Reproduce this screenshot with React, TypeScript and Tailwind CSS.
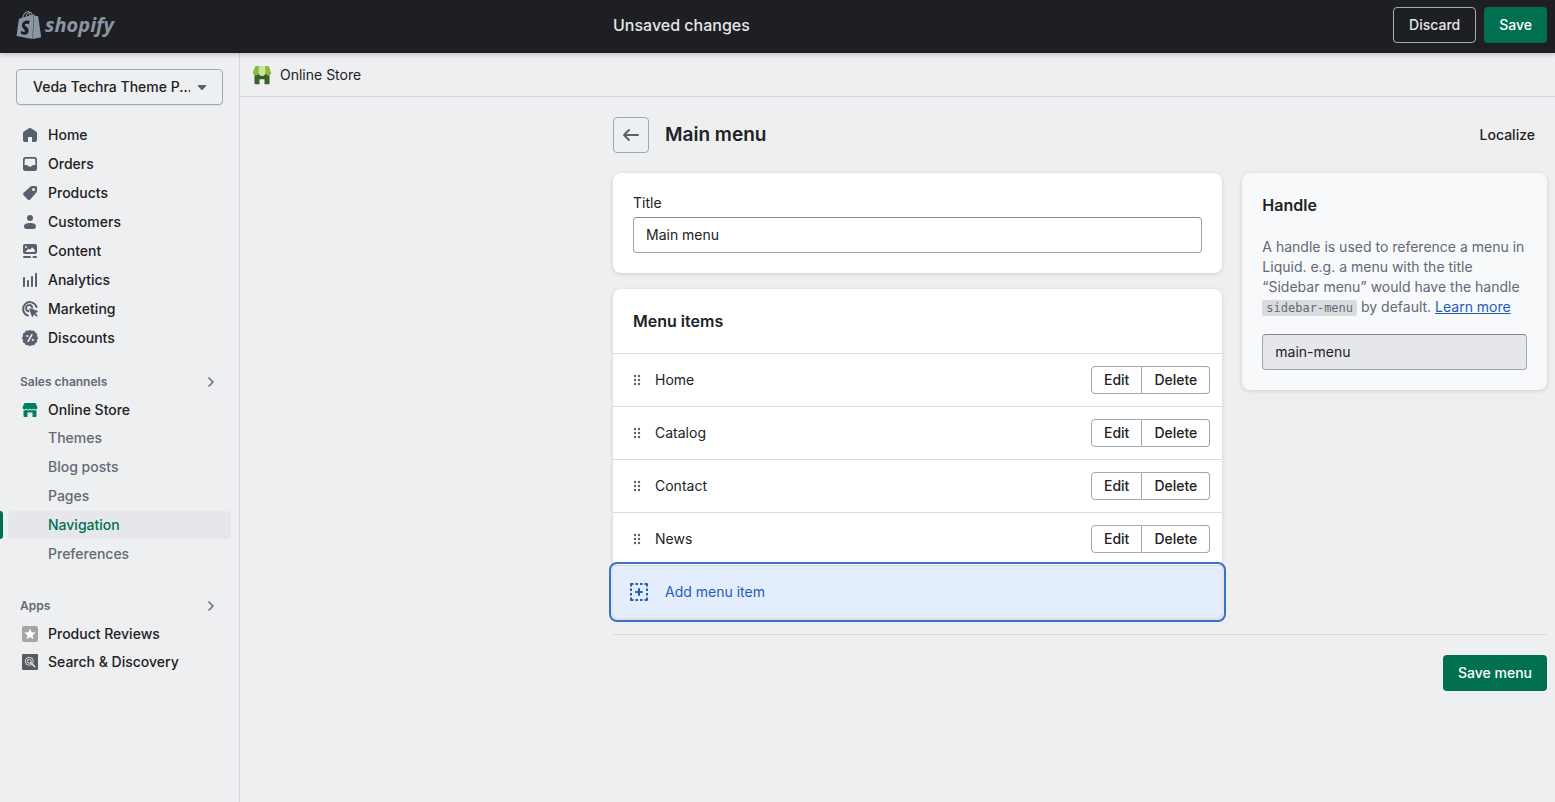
import type { ReactNode } from 'react';
import { SiShopify } from 'react-icons/si';

type NavEntry = { label: string; icon: ReactNode };

function Glyph({ children, className = '' }: { children: ReactNode; className?: string }) {
  return (
    <svg viewBox="0 0 20 20" aria-hidden="true" className={`h-5 w-5 shrink-0 ${className}`} fill="currentColor">
      {children}
    </svg>
  );
}

const mainNav: NavEntry[] = [
  {
    label: 'Home',
    icon: (
      <Glyph>
        <path d="M3 8.2c0-.7.3-1.3.9-1.7l5.2-3.3a1.7 1.7 0 0 1 1.8 0l5.2 3.3c.6.4.9 1 .9 1.7v6.9c0 1-.9 1.9-1.9 1.9h-2.6a.5.5 0 0 1-.5-.5v-4a.5.5 0 0 0-.5-.5h-3a.5.5 0 0 0-.5.5v4a.5.5 0 0 1-.5.5H4.9c-1 0-1.9-.9-1.9-1.9z" />
      </Glyph>
    ),
  },
  {
    label: 'Orders',
    icon: (
      <Glyph>
        <path
          fillRule="evenodd"
          d="M5.5 3A2.5 2.5 0 0 0 3 5.5v9A2.5 2.5 0 0 0 5.5 17h9a2.5 2.5 0 0 0 2.5-2.500v-9A2.5 2.5 0 0 0 14.500 3zM5.700 4.700a.9.900 0 0 0-.9.9L4.500 11h2.300c.4 0 .7.200.9.600.3.700.9 1.200 2.300 1.200s2-.5 2.300-1.200c.2-.4.500-.6.900-.6h2.300l-.3-5.400a.9.900 0 0 0-.9-.9z"
        />
      </Glyph>
    ),
  },
  {
    label: 'Products',
    icon: (
      <Glyph>
        <path
          fillRule="evenodd"
          d="M10.600 3.500A2 2 0 0 1 12 3h3.500A1.500 1.500 0 0 1 17 4.500V8c0 .6-.2 1.100-.6 1.500l-6.200 6.900a1.700 1.700 0 0 1-2.400 0l-4.200-4.200a1.700 1.700 0 0 1 0-2.400zM13.500 8a1.500 1.500 0 1 0 0-3 1.500 1.500 0 0 0 0 3z"
        />
      </Glyph>
    ),
  },
  {
    label: 'Customers',
    icon: (
      <Glyph>
        <circle cx="10" cy="6" r="3" />
        <path d="M4 14.200C4 12.200 6.500 11 10 11s6 1.200 6 3.200c0 1.700-1 2.800-2.500 2.800h-7C5 17 4 15.900 4 14.200z" />
      </Glyph>
    ),
  },
  {
    label: 'Content',
    icon: (
      <Glyph>
        <path
          fillRule="evenodd"
          d="M5 3a2 2 0 0 0-2 2v6a2 2 0 0 0 2 2h10a2 2 0 0 0 2-2V5a2 2 0 0 0-2-2zM6 7a1 1 0 1 0 0-2 1 1 0 0 0 0 2zM5.200 11h9.600V9.100a.5.500 0 0 0-.2-.4l-2-2a.6.600 0 0 0-.8 0L10 8.800l-1.100-.9a.6.600 0 0 0-.8 0z"
        />
        <rect x="3" y="15" width="8" height="2" rx="1" />
        <rect x="12.500" y="15" width="4.500" height="2" rx="1" />
      </Glyph>
    ),
  },
  {
    label: 'Analytics',
    icon: (
      <Glyph>
        <rect x="3" y="7" width="2" height="10" rx=".8" />
        <rect x="7" y="10" width="2" height="7" rx=".8" />
        <rect x="11" y="6" width="2" height="11" rx=".8" />
        <rect x="15" y="3" width="2" height="14" rx=".8" />
      </Glyph>
    ),
  },
  {
    label: 'Marketing',
    icon: (
      <Glyph>
        <g fill="none" stroke="currentColor" strokeWidth="1.900" strokeLinecap="round">
          <path d="M16.600 8A6.900 6.900 0 1 0 8 16.600" />
          <path d="M12.200 8.500A3.100 3.100 0 1 0 8.500 12.200" />
        </g>
        <path d="M9.300 10.200c-.2-.6.400-1.200 1-1l7 2.600c.7.300.7 1.200 0 1.500l-2 .8 2 2a.8.800 0 0 1-1.200 1.200l-2-2-.9 1.900c-.3.700-1.300.7-1.500 0z" />
      </Glyph>
    ),
  },
  {
    label: 'Discounts',
    icon: (
      <Glyph>
        <path d="M10 2l1.900 1 2.100-.2 1.100 1.900L17 5.800l-.2 2.200L18 10l-1.200 1.900.2 2.200-1.900 1.100-1.100 1.900-2.100-.2L10 18l-1.900-1.100-2.100.2-1.100-1.900L3 14.100l.2-2.200L2 10l1.200-2L3 5.800l1.900-1.100L6 2.800l2.100.2z" stroke="currentColor" strokeWidth=".4" strokeLinejoin="round" />
        <path d="M11.900 6.700l-3.800 6.600" stroke="#eeeff1" strokeWidth="1.600" strokeLinecap="round" />
        <circle cx="7.200" cy="8" r="1.100" fill="#eeeff1" />
        <circle cx="12.800" cy="12" r="1.100" fill="#eeeff1" />
      </Glyph>
    ),
  },
];

const storeNav = ['Themes', 'Blog posts', 'Pages', 'Navigation', 'Preferences'];
const menuItems = ['Home', 'Catalog', 'Contact', 'News'];

const appNav: NavEntry[] = [
  {
    label: 'Product Reviews',
    icon: (
      <Glyph>
        <rect x="2" y="2" width="16" height="16" rx="2.500" fill="#a5a5a5" />
        <path d="M10 4.500l1.600 3.700 4 .3-3 2.700.9 4-3.500-2.100-3.500 2.100.9-4-3-2.700 4-.3z" fill="#fff" />
      </Glyph>
    ),
  },
  {
    label: 'Search & Discovery',
    icon: (
      <Glyph>
        <rect x="2" y="2" width="16" height="16" rx="1" fill="#595c5e" />
        <g fill="none" stroke="#d9dbdd" strokeWidth="1">
          <circle cx="9.300" cy="9.300" r="4" />
          <circle cx="9.300" cy="9.300" r="2" />
          <path d="M10.500 10.500l4.300 4.300" strokeWidth="1.600" strokeLinecap="round" />
        </g>
      </Glyph>
    ),
  },
];

function SectionHeading({ children }: { children: string }) {
  return (
    <button type="button" className="flex h-7 w-full items-center justify-between pr-[18px] pl-5 text-xs font-semibold text-[#616a75]">
      {children}
      <Glyph className="text-[#6d7580]">
        <path d="M8 6l4 4-4 4" fill="none" stroke="currentColor" strokeWidth="1.700" strokeLinecap="round" strokeLinejoin="round" />
      </Glyph>
    </button>
  );
}

function NavLink({ entry, iconColor = 'text-[#57606e]' }: { entry: NavEntry; iconColor?: string }) {
  return (
    <a href="#" className="flex h-7 items-center gap-2 pl-5 font-medium">
      <span className={iconColor}>{entry.icon}</span>
      {entry.label}
    </a>
  );
}

function Sidebar() {
  return (
    <nav aria-label="Main" className="w-60 shrink-0 border-r border-[#d2d5d9] pt-4">
      <div className="mx-4 grid items-center">
        <select
          aria-label="Store"
          className="col-start-1 row-start-1 h-9 w-full appearance-none rounded border border-[#a0a8b4] bg-transparent pr-8 pl-4 font-medium shadow-[0_1px_0_rgba(0,0,0,0.05)]"
        >
          <option>Veda Techra Theme P...</option>
        </select>
        <Glyph className="pointer-events-none col-start-1 row-start-1 mr-[11px] justify-self-end text-[#57606e]">
          <path d="M6.300 8h7.400c.5 0 .7.500.4.900l-3.500 3.800a.8.800 0 0 1-1.200 0L5.900 8.900c-.3-.4-.1-.9.400-.9z" />
        </Glyph>
      </div>

      <ul className="mt-4 flex flex-col gap-px">
        {mainNav.map((entry) => (
          <li key={entry.label}>
            <NavLink entry={entry} />
          </li>
        ))}
      </ul>

      <div className="mt-4">
        <SectionHeading>Sales channels</SectionHeading>
        <NavLink
          iconColor="text-[#008060]"
          entry={{
            label: 'Online Store',
            icon: (
              <Glyph>
                <path d="M4.200 3.600A1 1 0 0 1 5.100 3h9.800a1 1 0 0 1 .9.600L17.400 7.300c.2 1.200-.6 2.200-1.700 2.200-.9 0-1.500-.5-1.900-1.100-.4.600-1 1.100-1.900 1.100S10.400 9 10 8.400c-.4.600-1 1.100-1.900 1.100S6.600 9 6.200 8.400c-.4.600-1 1.100-1.900 1.100-1.100 0-1.900-1-1.700-2.200z" />
                <path d="M3.500 10.400c1 .2 2-.1 2.700-.6 1.100.8 2.700.8 3.800 0 1.100.8 2.700.8 3.800 0 .7.500 1.700.8 2.700.6V16a1 1 0 0 1-1 1H13a.5.500 0 0 1-.5-.5V13a.5.500 0 0 0-.5-.5H8a.5.500 0 0 0-.5.500v3.500a.5.500 0 0 1-.5.500H4.500a1 1 0 0 1-1-1z" />
              </Glyph>
            ),
          }}
        />
        <ul className="flex flex-col gap-px">
          {storeNav.map((label) =>
            label === 'Navigation' ? (
              <li key={label} className="flex gap-[5px] pr-2">
                <span className="h-7 w-[3px] rounded-r bg-[#007050]" />
                <a href="#" aria-current="page" className="flex h-7 flex-1 items-center rounded bg-[#e6e7ea] pl-10 font-medium text-[#007050]">
                  {label}
                </a>
              </li>
            ) : (
              <li key={label}>
                <a href="#" className="flex h-7 items-center pl-12 font-medium text-[#616a75]">
                  {label}
                </a>
              </li>
            ),
          )}
        </ul>
      </div>

      <div className="mt-6">
        <SectionHeading>Apps</SectionHeading>
        {appNav.map((entry) => (
          <NavLink key={entry.label} entry={entry} />
        ))}
      </div>
    </nav>
  );
}

function TopBar() {
  return (
    <header className="z-10 flex h-[53px] items-start bg-[#1e1f23] text-white shadow-[0_2px_4px_rgba(0,0,0,0.18)]">
      <a href="#" aria-label="Shopify home" className="flex h-[50px] w-60 shrink-0 items-center gap-0.5 pl-[15px] text-[#8a96a3]">
        <SiShopify className="h-7 w-7" />
        <span className="font-['Open_Sans',sans-serif] text-xl leading-6 font-bold italic">shopify</span>
      </a>
      <div className="flex min-w-0 flex-1 justify-end pt-[7px] pr-2">
        <div className="flex w-full max-w-[934px] items-center gap-2">
          <h2 className="mr-auto text-base font-medium text-[#e4e6e9]">Unsaved changes</h2>
          <button type="button" className="h-9 rounded border border-[#a6acb5] px-[15px] font-medium text-[#e4e6e9]">
            Discard
          </button>
          <button type="button" className="h-9 rounded bg-[#007050] px-[15px] font-medium">
            Save
          </button>
        </div>
      </div>
    </header>
  );
}

function StoreIcon() {
  return (
    <svg viewBox="0 0 20 20" aria-hidden="true" className="h-5 w-5">
      <path d="M2.500 8h15v10.200a1 1 0 0 1-1 1H12.500v-5h-5v5h-4a1 1 0 0 1-1-1z" fill="#36622b" />
      <path d="M3.300 1h4.100L6.800 7.800a2.900 2.900 0 0 1-5.800-.6z" fill="#8dbb3c" />
      <path d="M16.700 1h-4.100l.6 6.800a2.900 2.900 0 0 0 5.800-.6z" fill="#8dbb3c" />
      <path d="M7 1h6l.4 6.500a3.400 3.400 0 0 1-6.800 0z" fill="#cbe59a" />
    </svg>
  );
}

function MenuRow({ label }: { label: string }) {
  return (
    <li className="flex h-[53px] items-center border-t border-[#d8dade] pr-3 pl-[14px]">
      <Glyph className="mr-2 text-[#57606e]">
        {[6, 10, 14].map((y) => (
          <g key={y}>
            <circle cx="8" cy={y} r="1.200" />
            <circle cx="12" cy={y} r="1.200" />
          </g>
        ))}
      </Glyph>
      <span className="mr-auto">{label}</span>
      <button type="button" aria-label={`Edit ${label}`} className="h-7 rounded-l border border-[#a0a8b4] px-3 font-medium">
        Edit
      </button>
      <button type="button" aria-label={`Delete ${label}`} className="h-7 rounded-r border border-l-0 border-[#a0a8b4] px-3 font-medium">
        Delete
      </button>
    </li>
  );
}

const card = 'rounded-lg shadow-[0_1px_4px_rgba(0,0,0,0.14)]';
const field = 'block h-9 w-full rounded border border-[#a0a4b0] border-t-[#84878d] px-3 pb-0.5';

export default function App() {
  return (
    <div className="flex min-h-screen flex-col bg-[#eeeff1] font-[Inter,sans-serif] text-sm text-[#202223]">
      <TopBar />
      <div className="flex flex-1">
        <Sidebar />
        <main className="min-w-0 flex-1">
          <div className="flex h-11 items-center gap-2 border-b border-[#d2d5db] pl-3">
            <StoreIcon />
            Online Store
          </div>

          <div className="mr-2 ml-auto max-w-[934px] pt-5">
            <div className="flex items-center gap-4">
              <button type="button" aria-label="Back" className="flex h-9 w-9 items-center justify-center rounded border border-[#a0a8b4] text-[#57606e]">
                <Glyph>
                  <path d="M17 10H3.500M8 5l-5 5 5 5" fill="none" stroke="currentColor" strokeWidth="1.900" strokeLinecap="round" strokeLinejoin="round" />
                </Glyph>
              </button>
              <h1 className="text-[19px] leading-7 font-semibold">Main menu</h1>
              <button type="button" className="ml-auto h-9 px-3 font-medium">
                Localize
              </button>
            </div>

            <div className="mt-5 grid grid-cols-[2fr_1fr] items-start gap-5">
              <div className="flex flex-col gap-4">
                <section className={`bg-white p-5 ${card}`}>
                  <label htmlFor="menu-title" className="mb-1 block leading-5">
                    Title
                  </label>
                  <input id="menu-title" defaultValue="Main menu" className={field} />
                </section>

                <section className={`bg-white ${card}`}>
                  <h2 className="p-5 text-base leading-6 font-semibold">Menu items</h2>
                  <ul>
                    {menuItems.map((label) => (
                      <MenuRow key={label} label={label} />
                    ))}
                  </ul>
                  <button
                    type="button"
                    className="relative flex h-[53px] w-full items-center gap-4 rounded-b-lg border-t border-[#d2d5db] bg-[#e4edfc] pl-4 text-[#265cb8] after:absolute after:-inset-x-1 after:-top-1 after:-bottom-1 after:rounded-lg after:border-2 after:border-[#3673d0]"
                  >
                    <Glyph>
                      <g fill="none" stroke="currentColor" strokeWidth="2">
                        <path d="M2 4.500V2h2.500M15.500 2H18v2.500M18 15.500V18h-2.500M4.500 18H2v-2.500" strokeLinejoin="round" />
                        <path d="M6.500 2h2.500M11 2h2.500M6.500 18h2.500M11 18h2.500M2 6.500v2.500M2 11v2.500M18 6.500v2.500M18 11v2.500" />
                        <path d="M10 7v6M7 10h6" strokeLinecap="round" />
                      </g>
                    </Glyph>
                    Add menu item
                  </button>
                </section>
              </div>

              <section className={`bg-[#f8f9fb] p-5 ${card}`}>
                <h2 className="text-base leading-6 font-semibold">Handle</h2>
                <p className="mt-5 leading-5 text-[#616a75]">
                  A handle is used to reference a menu in Liquid. e.g. a menu with the title “Sidebar menu” would have the handle{' '}
                  <code className="rounded-xs bg-[#d9dbe0] px-1 py-px font-['DejaVu_Sans_Mono',monospace] text-xs">sidebar-menu</code> by default.{' '}
                  <a href="#" className="text-[#265cb8] underline">
                    Learn more
                  </a>
                </p>
                <input aria-label="Handle" readOnly defaultValue="main-menu" className={`mt-[17px] bg-[#e6e7ea] ${field}`} />
              </section>
            </div>

            <div className="mt-4 flex justify-end border-t border-[#d8dade] pt-5">
              <button type="button" className="h-9 rounded bg-[#007050] px-[15px] font-medium text-white">
                Save menu
              </button>
            </div>
          </div>
        </main>
      </div>
    </div>
  );
}
